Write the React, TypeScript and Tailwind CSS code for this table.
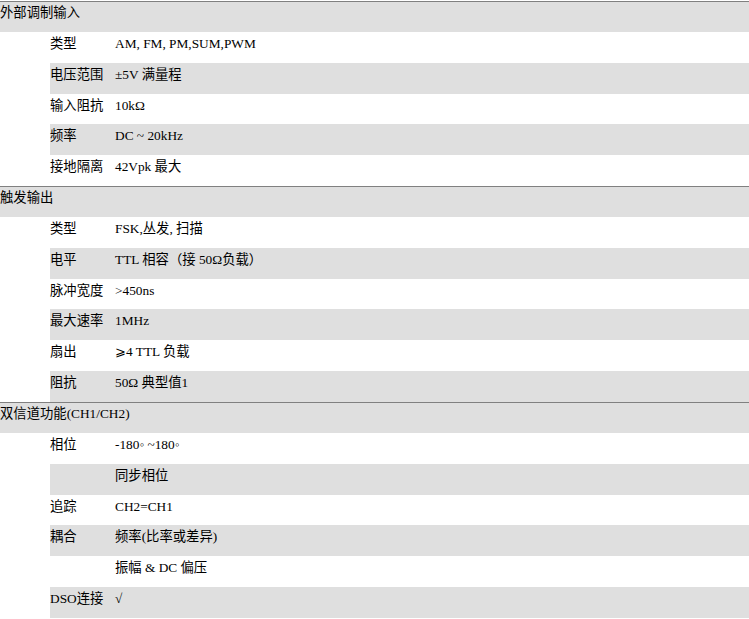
import React from "react";

type Row =
  | { kind: "h"; text: string }
  | { kind: "r"; label: string; value: string };

const rows: Row[] = [
  { kind: "h", text: "外部调制输入" },
  { kind: "r", label: "类型", value: "AM, FM, PM,SUM,PWM" },
  { kind: "r", label: "电压范围", value: "±5V 满量程" },
  { kind: "r", label: "输入阻抗", value: "10kΩ" },
  { kind: "r", label: "频率", value: "DC ~ 20kHz" },
  { kind: "r", label: "接地隔离", value: "42Vpk 最大" },
  { kind: "h", text: "触发输出" },
  { kind: "r", label: "类型", value: "FSK,丛发, 扫描" },
  { kind: "r", label: "电平", value: "TTL 相容（接 50Ω负载）" },
  { kind: "r", label: "脉冲宽度", value: ">450ns" },
  { kind: "r", label: "最大速率", value: "1MHz" },
  { kind: "r", label: "扇出", value: "⩾4 TTL 负载" },
  { kind: "r", label: "阻抗", value: "50Ω 典型值1" },
  { kind: "h", text: "双信道功能(CH1/CH2)" },
  { kind: "r", label: "相位", value: "-180◦ ~180◦" },
  { kind: "r", label: "", value: "同步相位" },
  { kind: "r", label: "追踪", value: "CH2=CH1" },
  { kind: "r", label: "耦合", value: "频率(比率或差异)" },
  { kind: "r", label: "", value: "振幅 & DC 偏压" },
  { kind: "r", label: "DSO连接", value: "√" },
];

export default function App() {
  let sub = 0;
  return (
    <div
      className="w-[749px] pt-px bg-white text-black text-[13.33px] leading-[18px]"
      style={{ fontFamily: '"Liberation Serif", "Noto Sans CJK SC", serif' }}
    >
      {rows.map((r, i) => {
        if (r.kind === "h") {
          sub = 0;
          return (
            <div
              key={i}
              className="h-[30.85px] bg-[#dfdfdf] border-t border-[#808080] pt-[2px] whitespace-nowrap"
            >
              {r.text}
            </div>
          );
        }
        sub += 1;
        const gray = sub % 2 === 0;
        return (
          <div key={i} className="h-[30.85px] pl-[50px]">
            <div
              className={`h-full flex pt-[3px] whitespace-nowrap ${gray ? "bg-[#dfdfdf]" : "bg-white"}`}
            >
              <div className="w-[65px] shrink-0">{r.label}</div>
              <div>{r.value}</div>
            </div>
          </div>
        );
      })}
    </div>
  );
}
